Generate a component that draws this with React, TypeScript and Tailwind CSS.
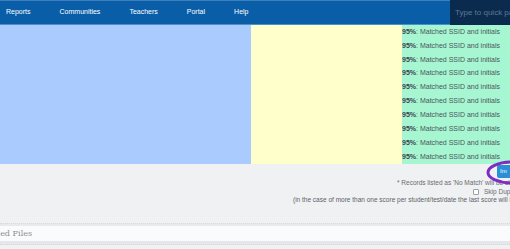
import React from "react";

const navItems = ["Reports", "Communities", "Teachers", "Portal", "Help"];

const rows = Array.from({ length: 10 });

const App = () => {
  return (
    <div
      className="w-[510px] h-[249px] overflow-hidden bg-[#f0f1f3] relative"
      style={{ fontFamily: '"Liberation Sans", Arial, sans-serif' }}
    >
      {/* top nav */}
      <div className="flex h-[25px] bg-[#0a5ea8] border-t border-t-[#3d7fbf] border-b border-b-[#4b8fd0]">
        <div className="flex flex-1 items-center gap-[29px] pl-[6px] text-[7px] text-white">
          {navItems.map((item) => (
            <span key={item}>{item}</span>
          ))}
        </div>
        <div className="w-[60px] -mt-px -mb-px bg-[#0b2b4e] flex items-center pl-[5px] text-[8px] text-[#5f7896] whitespace-nowrap overflow-hidden">
          Type to quick pa
        </div>
      </div>

      {/* colored matching table */}
      <div className="flex h-[139px]">
        <div className="w-[251px] bg-[#a9cbfd]" />
        <div className="w-[151px] bg-[#ffffcc]" />
        <div className="flex-1 bg-[#a6f7d1] flex flex-col">
          {rows.map((_, i) => (
            <div
              key={i}
              className="h-[14px] flex items-center whitespace-nowrap text-[7px] text-[#4d5560]"
            >
              <b className="text-[#3c434b]">95%</b>: Matched SSID and initials
            </div>
          ))}
        </div>
      </div>

      {/* import area */}
      <div className="flex flex-col h-[56px] pt-[1px]">
        <div className="flex justify-end">
          <button className="w-[13px] h-[13px] bg-[#2a8fd6] text-white text-[6px] overflow-hidden pl-[3px] text-left rounded-l-[2px]">
            Im
          </button>
        </div>
        <div className="pl-[397px] mt-[1px] text-[6.5px] text-[#666b72] whitespace-nowrap leading-[8.5px]">
          * Records listed as 'No Match' will be skipped
        </div>
        <div className="pl-[473px] flex items-center gap-[5px] text-[6.5px] text-[#666b72] whitespace-nowrap leading-[8.5px]">
          <span className="w-[6px] h-[6px] border border-[#9aa0a6] bg-white rounded-[1px] shrink-0" />
          Skip Duplicates
        </div>
        <div className="pl-[293px] text-[6.5px] text-[#5c6168] whitespace-nowrap leading-[8.5px]">
          (in the case of more than one score per student/test/date the last score will be used)
        </div>
      </div>

      {/* uploaded files bar */}
      <div className="mt-[3px] border-t border-dotted border-t-[#d9dadd] h-[3px] bg-[#e9eaec]" />
      <div className="h-[15px] bg-[#fafbfc] flex items-center overflow-hidden">
        <span
          className="-ml-[29px] text-[8px] text-[#8a8d92] whitespace-nowrap"
          style={{ fontFamily: '"DejaVu Serif", serif' }}
        >
          Uploaded Files
        </span>
      </div>
      <div className="h-[4px] bg-[#e6e7ea] border-b border-dotted border-b-[#d6d7da]" />

      {/* annotation ellipse over the import button */}
      <svg
        className="absolute left-[480px] top-[157px] pointer-events-none"
        width="30"
        height="32"
        viewBox="0 0 30 32"
      >
        <ellipse
          cx="32"
          cy="15.5"
          rx="24"
          ry="10.5"
          fill="none"
          stroke="#7f2cc0"
          strokeWidth="3"
        />
      </svg>
    </div>
  );
};

export default App;
